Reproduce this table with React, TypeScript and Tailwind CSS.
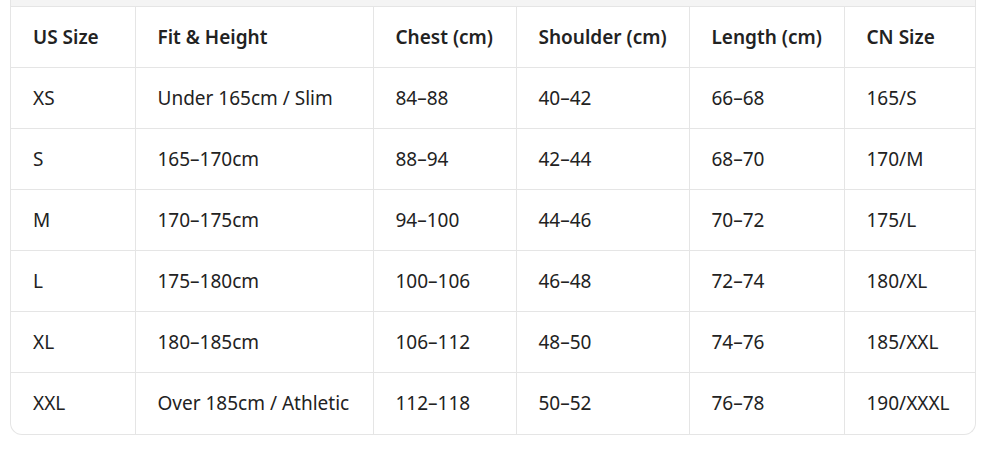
const headers = ['US Size', 'Fit & Height', 'Chest (cm)', 'Shoulder (cm)', 'Length (cm)', 'CN Size'];

const rows = [
  ['XS', 'Under 165cm / Slim', '84–88', '40–42', '66–68', '165/S'],
  ['S', '165–170cm', '88–94', '42–44', '68–70', '170/M'],
  ['M', '170–175cm', '94–100', '44–46', '70–72', '175/L'],
  ['L', '175–180cm', '100–106', '46–48', '72–74', '180/XL'],
  ['XL', '180–185cm', '106–112', '48–50', '74–76', '185/XXL'],
  ['XXL', 'Over 185cm / Athletic', '112–118', '50–52', '76–78', '190/XXXL'],
];

const widths = ['w-[124px]', 'w-[238px]', 'w-[143px]', 'w-[173px]', 'w-[155px]', 'w-[132px]'];

export default function App() {
  return (
    <div className="h-[450px] w-[1006px] bg-white pl-[10px] font-['Noto_Sans','Open_Sans',sans-serif] text-[19px] text-[#222]">
      <div className="w-[966px] overflow-hidden rounded-b-xl border-x border-b border-[#e5e5e5]">
        <div className="h-[6px] bg-[#f4f4f4]" />
        <table className="w-full table-fixed border-collapse">
          <thead>
            <tr className="h-[61px] border-y border-[#e5e5e5]">
              {headers.map((h, i) => (
                <th
                  key={h}
                  className={`${widths[i]} border-l border-[#e5e5e5] pl-[22px] text-left font-semibold first:border-l-0`}
                >
                  {h}
                </th>
              ))}
            </tr>
          </thead>
          <tbody>
            {rows.map((r, ri) => (
              <tr key={r[0]} className={`h-[61px] ${ri < rows.length - 1 ? 'border-b border-[#e5e5e5]' : ''}`}>
                {r.map((c, i) => (
                  <td key={i} className="border-l border-[#e5e5e5] pl-[22px] first:border-l-0">
                    {c}
                  </td>
                ))}
              </tr>
            ))}
          </tbody>
        </table>
      </div>
    </div>
  );
}
